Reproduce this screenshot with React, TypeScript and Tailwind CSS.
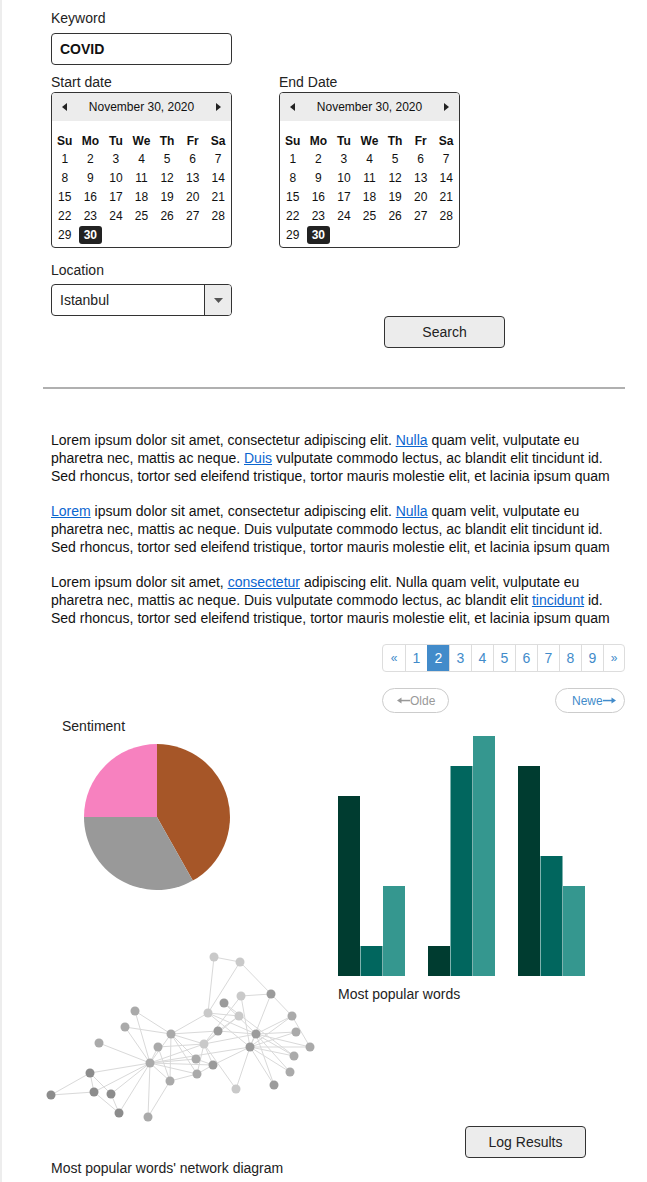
import React from "react";

const weeks = [
  [1, 2, 3, 4, 5, 6, 7],
  [8, 9, 10, 11, 12, 13, 14],
  [15, 16, 17, 18, 19, 20, 21],
  [22, 23, 24, 25, 26, 27, 28],
  [29, 30],
];
const dayNames = ["Su", "Mo", "Tu", "We", "Th", "Fr", "Sa"];

const Tri = ({ dir }: { dir: "l" | "r" }) => (
  <svg width="5" height="8" viewBox="0 0 5 8">
    <path d={dir === "l" ? "M5 0 L0 4 L5 8 Z" : "M0 0 L5 4 L0 8 Z"} fill="#222" />
  </svg>
);

const Calendar = () => (
  <div className="w-[181px] h-[156px] rounded-[4px] border border-[#333] overflow-hidden text-[12px] leading-[14px] text-[#111]">
    <div className="h-[28px] bg-[#ececec] flex items-center justify-between px-[10px]">
      <Tri dir="l" />
      <span>November 30, 2020</span>
      <Tri dir="r" />
    </div>
    <div className="grid grid-cols-7 mt-[12px]">
      {dayNames.map((d) => (
        <div key={d} className="h-[16px] flex items-center justify-center font-bold">
          {d}
        </div>
      ))}
      {weeks.flat().map((n) => (
        <div key={n} className="h-[19px] flex items-center justify-center">
          {n === 30 ? (
            <span className="w-[23px] h-[18px] rounded-[3px] bg-[#222] text-white font-bold flex items-center justify-center">
              30
            </span>
          ) : (
            n
          )}
        </div>
      ))}
    </div>
  </div>
);

const Arrow = ({ dir }: { dir: "l" | "r" }) => (
  <svg width="13" height="7" viewBox="0 0 13 7" className="shrink-0">
    {dir === "l" ? (
      <>
        <path d="M0 3.5 L4.5 0.5 V6.5 Z" fill="currentColor" />
        <rect x="3" y="2.8" width="10" height="1.5" fill="currentColor" />
      </>
    ) : (
      <>
        <path d="M13 3.5 L8.5 0.5 V6.5 Z" fill="currentColor" />
        <rect x="0" y="2.8" width="10" height="1.5" fill="currentColor" />
      </>
    )}
  </svg>
);

const Link = ({ children }: { children: React.ReactNode }) => (
  <a href="#" className="text-[#0b66d0] underline">
    {children}
  </a>
);

const Pie = () => (
  <svg width="160" height="160" viewBox="0 0 160 160">
    <path d="M80 80 L80 7 A73 73 0 0 1 115.8 143.6 Z" fill="#a65628" />
    <path d="M80 80 L115.8 143.6 A73 73 0 0 1 7 80 Z" fill="#999999" />
    <path d="M80 80 L7 80 A73 73 0 0 1 80 7 Z" fill="#f781bf" />
  </svg>
);

const barGroups = [
  [180, 30, 90],
  [30, 210, 240],
  [210, 120, 90],
];
const barColors = ["#003c30", "#01665e", "#35978f"];

const Bars = () => (
  <svg width="250" height="240" viewBox="0 0 250 240">
    {barGroups.map((g, gi) =>
      g.map((v, i) => (
        <rect
          key={`${gi}-${i}`}
          x={gi * 90 + i * 22.5}
          y={240 - v}
          width={22}
          height={v}
          fill={barColors[i]}
        />
      ))
    )}
  </svg>
);

// node positions in page coordinates, shade: 0 light, 1 mid, 2 dark, 3 darkest
const nodes: [number, number, number][] = [
  [214, 957, 0], [240, 962, 0], [241, 996, 0], [271, 994, 2], [224, 1003, 2],
  [208, 1013, 0], [239, 1016, 0], [292, 1016, 1], [135, 1011, 1], [125, 1027, 1],
  [218, 1031, 2], [256, 1034, 2], [296, 1032, 1], [171, 1034, 1], [99, 1043, 1],
  [158, 1047, 1], [204, 1044, 0], [250, 1047, 2], [310, 1047, 1], [196, 1059, 1],
  [294, 1056, 1], [150, 1063, 1], [213, 1065, 2], [90, 1073, 3], [197, 1074, 1],
  [170, 1081, 1], [290, 1072, 1], [236, 1089, 0], [274, 1085, 2], [51, 1095, 3],
  [94, 1092, 3], [111, 1094, 3], [119, 1113, 3], [148, 1117, 1],
];
const edges: [number, number][] = [
  [1, 2], [1, 6], [2, 6], [2, 4], [3, 4], [3, 18], [3, 17], [4, 8], [4, 18],
  [5, 12], [5, 21], [6, 7], [6, 12], [6, 18], [6, 14], [7, 11], [7, 17],
  [8, 19], [8, 18], [8, 12], [9, 14], [9, 22], [10, 14], [10, 22], [11, 14],
  [11, 12], [11, 17], [12, 13], [12, 18], [12, 21], [12, 27], [12, 17], [12, 19],
  [12, 29], [13, 18], [14, 22], [14, 26], [14, 20], [14, 25], [14, 17], [15, 22],
  [16, 22], [16, 26], [16, 17], [17, 22], [17, 23], [17, 25], [17, 28], [18, 19],
  [18, 21], [18, 27], [18, 29], [18, 23], [18, 22], [18, 28], [20, 22], [20, 23],
  [22, 24], [22, 31], [22, 32], [22, 33], [22, 34], [22, 26], [22, 25], [22, 23],
  [24, 30], [24, 31], [24, 32], [30, 31], [31, 33], [32, 33], [26, 34], [26, 25],
  [25, 23],
];
const shades = ["#c9c9c9", "#aaaaaa", "#9b9b9b", "#8c8c8c"];

const Network = () => (
  <svg width="275" height="180" viewBox="45 945 275 180" className="overflow-visible">
    {edges.map(([a, b], i) => (
      <line
        key={i}
        x1={nodes[a - 1][0]}
        y1={nodes[a - 1][1]}
        x2={nodes[b - 1][0]}
        y2={nodes[b - 1][1]}
        stroke="#d9d9d9"
        strokeWidth={1}
      />
    ))}
    {nodes.map(([x, y, s], i) => (
      <circle key={i} cx={x} cy={y} r={4.5} fill={shades[s]} />
    ))}
  </svg>
);

export default function App() {
  return (
    <div className="min-h-[1182px] border-l-2 border-[#ededed] bg-white font-['Liberation_Sans',Arial,sans-serif] text-[14px] leading-4 text-[#222]">
      <div className="ml-[41px] w-[582px]">
        {/* Search form */}
        <div className="pl-2 pt-[10px]">
          <div>Keyword</div>
          <div className="mt-[7px] w-[181px] h-8 rounded-[4px] border border-[#333] flex items-center pl-[8px] font-bold text-[#111]">
            COVID
          </div>

          <div className="flex gap-[47px] mt-[9px]">
            <div>
              <div>Start date</div>
              <div className="mt-[2px]">
                <Calendar />
              </div>
            </div>
            <div>
              <div>End Date</div>
              <div className="mt-[2px]">
                <Calendar />
              </div>
            </div>
          </div>

          <div className="mt-[14px]">Location</div>
          <div className="mt-[6px] w-[181px] h-8 rounded-[4px] border border-[#333] flex overflow-hidden">
            <div className="flex-1 flex items-center pl-[8px]">Istanbul</div>
            <div className="w-[27px] border-l border-[#333] bg-[#ececec] flex items-center justify-center">
              <svg width="9" height="5" viewBox="0 0 9 5">
                <path d="M0 0 H9 L4.5 5 Z" fill="#555" />
              </svg>
            </div>
          </div>
          <button className="ml-[333px] w-[121px] h-8 rounded-[4px] border border-[#333] bg-[#ececec] text-[14px]">
            Search
          </button>
        </div>

        <div className="mt-[39px] h-[2px] bg-[#b0b0b0]" />

        {/* Text */}
        <div className="pl-2 mt-[42px] text-[14px] leading-[18px] text-[#111] whitespace-nowrap">
          <p className="mb-[17px]">
            Lorem ipsum dolor sit amet, consectetur adipiscing elit. <Link>Nulla</Link> quam velit, vulputate eu
            <br />
            pharetra nec, mattis ac neque. <Link>Duis</Link> vulputate commodo lectus, ac blandit elit tincidunt id.
            <br />
            Sed rhoncus, tortor sed eleifend tristique, tortor mauris molestie elit, et lacinia ipsum quam
          </p>
          <p className="mb-[17px]">
            <Link>Lorem</Link> ipsum dolor sit amet, consectetur adipiscing elit. <Link>Nulla</Link> quam velit, vulputate eu
            <br />
            pharetra nec, mattis ac neque. Duis vulputate commodo lectus, ac blandit elit tincidunt id.
            <br />
            Sed rhoncus, tortor sed eleifend tristique, tortor mauris molestie elit, et lacinia ipsum quam
          </p>
          <p>
            Lorem ipsum dolor sit amet, <Link>consectetur</Link> adipiscing elit. Nulla quam velit, vulputate eu
            <br />
            pharetra nec, mattis ac neque. Duis vulputate commodo lectus, ac blandit elit <Link>tincidunt</Link> id.
            <br />
            Sed rhoncus, tortor sed eleifend tristique, tortor mauris molestie elit, et lacinia ipsum quam
          </p>
        </div>

        {/* Pagination */}
        <div className="mt-[17px] flex justify-end">
          <div className="w-[243px]">
            <div className="flex h-[28px] rounded-[4px] border border-[#ddd] text-[#428bca] overflow-hidden">
              <div className="w-[22px] flex items-center justify-center text-[12px]">«</div>
              {[1, 2, 3, 4, 5, 6, 7, 8, 9].map((n) => (
                <div
                  key={n}
                  className={
                    n === 2
                      ? "w-[22px] border-l border-[#428bca] bg-[#428bca] text-white flex items-center justify-center"
                      : "w-[22px] border-l border-[#ddd] flex items-center justify-center"
                  }
                >
                  {n}
                </div>
              ))}
              <div className="flex-1 border-l border-[#ddd] flex items-center justify-center text-[12px]">»</div>
            </div>
            <div className="mt-[16px] flex justify-between text-[12px]">
              <div className="w-[67px] h-[25px] rounded-full border border-[#ccc] flex items-center pl-[14px] text-[#999]">
                <Arrow dir="l" />
                <span className="whitespace-nowrap">Olde</span>
              </div>
              <div className="w-[70px] h-[25px] rounded-full border border-[#ccc] flex items-center pl-[16px] text-[#428bca]">
                <span className="whitespace-nowrap">Newe</span>
                <Arrow dir="r" />
              </div>
            </div>
          </div>
        </div>

        {/* Charts */}
        <div className="pl-2 mt-[5px] flex">
          <div className="w-[287px] shrink-0">
            <div className="pl-[11px]">Sentiment</div>
            <div className="ml-[26px] mt-[3px]">
              <Pie />
            </div>
            <div className="-ml-[6px] mt-[48px]">
              <Network />
            </div>
            <div className="mt-[35px]">Most popular words' network diagram</div>
          </div>
          <div>
            <div className="mt-[18px]">
              <Bars />
            </div>
            <div className="mt-[10px]">Most popular words</div>
            <button className="mt-[124px] ml-[127px] w-[121px] h-8 rounded-[4px] border border-[#333] bg-[#ececec] text-[14px]">
              Log Results
            </button>
          </div>
        </div>
      </div>
    </div>
  );
}
